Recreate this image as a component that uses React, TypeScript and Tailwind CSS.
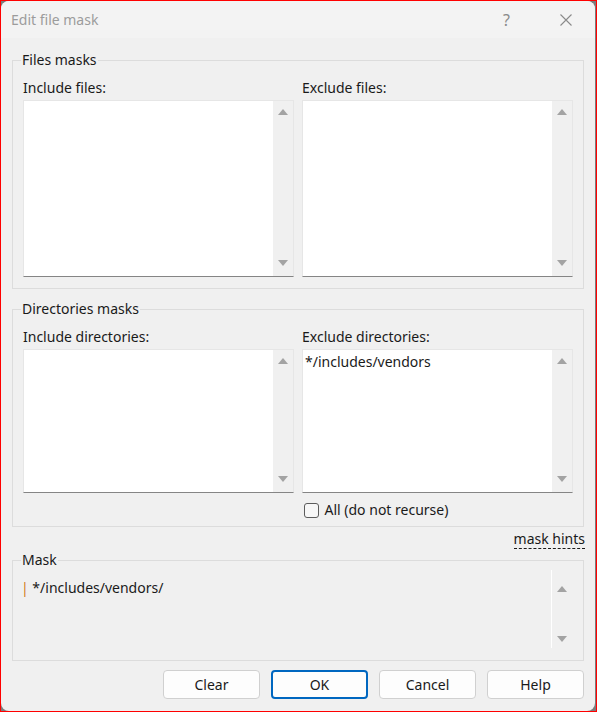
import type { ReactNode } from 'react';

const font = { fontFamily: '"Segoe UI", "Noto Sans", "Open Sans", sans-serif' };

function ArrowUp() {
  return (
    <svg width="10" height="6" viewBox="0 0 10 6" className="block">
      <path d="M0 6 L5 0 L10 6 Z" fill="#a3a3a3" />
    </svg>
  );
}

function ArrowDown() {
  return (
    <svg width="10" height="6" viewBox="0 0 10 6" className="block">
      <path d="M0 0 L10 0 L5 6 Z" fill="#a3a3a3" />
    </svg>
  );
}

function Group({ title, children, className = '' }: { title: string; children: ReactNode; className?: string }) {
  return (
    <fieldset className={`mx-[11px] border border-[#dcdcdc] px-[10px] ${className}`}>
      <legend className="ml-[-2px] px-[1px] text-[14px] leading-[20px] text-[#1a1a1a]">{title}</legend>
      {children}
    </fieldset>
  );
}

function ListBox({ label, lines = [], height }: { label: string; lines?: string[]; height: string }) {
  return (
    <div className="flex flex-1 flex-col">
      <div className="mt-[8px] text-[14px] leading-[20px] text-[#1a1a1a]">{label}</div>
      <div className={`mt-[2px] flex ${height} border border-b-[#858585] border-l-[#e6e6e6] border-r-[#e6e6e6] border-t-[#e6e6e6] bg-white`}>
        <div className="flex-1 px-[2px] pt-[2px] text-[14px] leading-[20px] text-[#1a1a1a]">
          {lines.map((l) => (
            <div key={l}>{l}</div>
          ))}
        </div>
        <div className="flex w-[20px] flex-col items-center justify-between bg-[#f0f0f0] pb-[10px] pt-[8px]">
          <ArrowUp />
          <ArrowDown />
        </div>
      </div>
    </div>
  );
}

function Button({ children, primary = false }: { children: ReactNode; primary?: boolean }) {
  return (
    <button
      className={`h-[29px] w-[97px] rounded-[4px] bg-[#fdfdfd] text-[14px] text-[#1a1a1a] ${
        primary ? 'border-2 border-[#0067c0]' : 'border border-[#d0d0d0]'
      }`}
    >
      {children}
    </button>
  );
}

export default function App() {
  return (
    <div className="h-[712px] w-[597px] border border-[#ff0000] bg-[#7c7c7c]" style={font}>
      <div className="flex h-full w-[594px] flex-col overflow-hidden rounded-[8px] bg-[#f0f0f0]">
        <div className="flex h-[37px] shrink-0 items-center bg-[#f3f3f3] pl-[10px]">
          <span className="text-[14px] text-[#9c9c9c]">Edit file mask</span>
          <span className="ml-auto mr-[50px] text-[16px] text-[#8a8a8a]">?</span>
          <svg width="12" height="12" viewBox="0 0 12 12" className="mr-[23px]">
            <path d="M0.5 0.5 L11.5 11.5 M11.5 0.5 L0.5 11.5" stroke="#8a8a8a" strokeWidth="1.1" />
          </svg>
        </div>

        <div className="mt-[12px] flex flex-col">
          <Group title="Files masks" className="pb-[11px]">
            <div className="flex gap-[8px]">
              <ListBox label="Include files:" height="h-[177px]" />
              <ListBox label="Exclude files:" height="h-[177px]" />
            </div>
          </Group>

          <Group title="Directories masks" className="mt-[10px] pb-[6px]">
            <div className="flex gap-[8px]">
              <ListBox label="Include directories:" height="h-[144px]" />
              <ListBox label="Exclude directories:" lines={['*/includes/vendors']} height="h-[144px]" />
            </div>
            <div className="mt-[7px] flex gap-[8px]">
              <div className="flex-1" />
              <label className="flex flex-1 items-center pl-[3px] text-[14px] leading-[20px] text-[#1a1a1a]">
                <span className="mr-[6px] h-[15px] w-[15px] rounded-[3px] border border-[#5c5c5c] bg-[#f7f7f7]" />
                All (do not recurse)
              </label>
            </div>
          </Group>

          <div className="mr-[10px] mt-[2px] flex justify-end">
            <span className="border-b border-dashed border-[#1a1a1a] text-[14px] leading-[19px] text-[#1a1a1a]">
              mask hints
            </span>
          </div>

          <Group title="Mask" className="mt-[1px] pb-[12px] pr-[11px]">
            <div className="flex h-[78px]">
              <div className="flex-1 pt-[8px] text-[14px] leading-[20px] text-[#1a1a1a]">
                <span className="ml-[-2px] text-[#d07a1a]">|</span> */includes/vendors/
              </div>
              <div className="flex w-[21px] flex-col items-center justify-between border-l border-white pb-[6px] pt-[16px]">
                <ArrowUp />
                <ArrowDown />
              </div>
            </div>
          </Group>

          <div className="mr-[11px] mt-[9px] flex justify-end gap-[11px]">
            <Button>Clear</Button>
            <Button primary>OK</Button>
            <Button>Cancel</Button>
            <Button>Help</Button>
          </div>
        </div>
      </div>
    </div>
  );
}
